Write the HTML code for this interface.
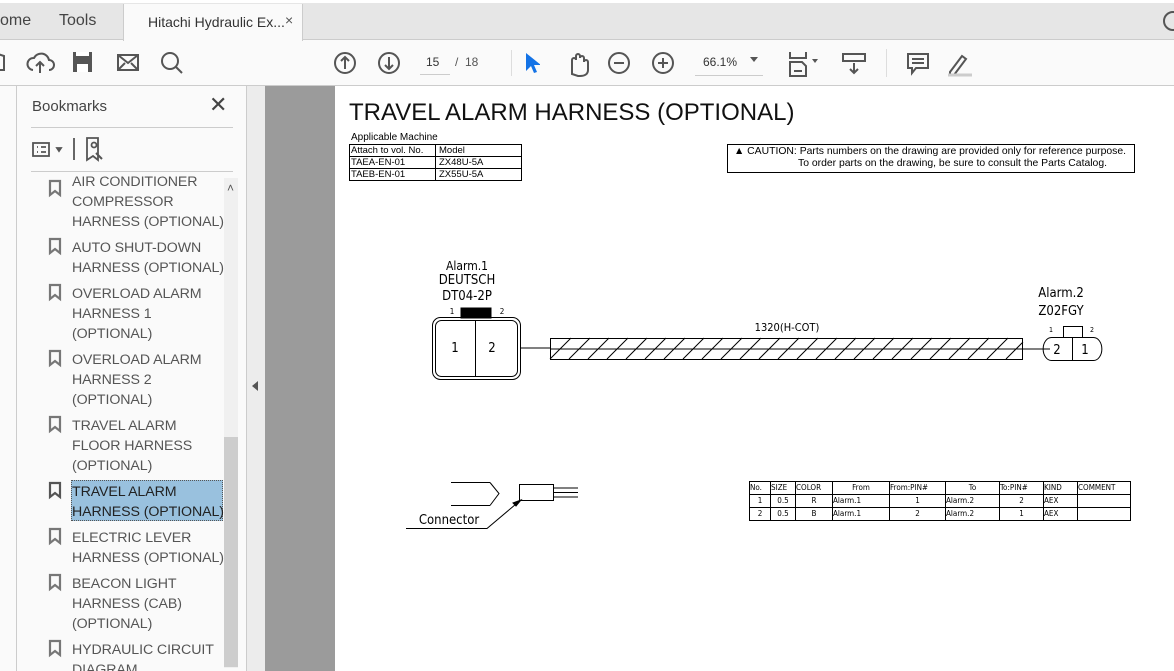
<!DOCTYPE html>
<html><head><meta charset="utf-8"><style>
*{margin:0;padding:0;box-sizing:border-box}
body{width:1174px;height:671px;overflow:hidden;position:relative;background:#fafafa;font-family:"Liberation Sans",sans-serif;color:#444}
.a{position:absolute}
.bm{position:absolute;left:72px;font-size:14.2px;line-height:20px;color:#555;letter-spacing:-0.1px;white-space:nowrap}
.t{font-family:"Liberation Sans",sans-serif;color:#000}
.n{font-family:"DejaVu Sans Condensed","Liberation Sans Narrow",sans-serif}
</style></head><body>
<!-- tab bar -->
<div class="a" style="left:0;top:0;width:1174px;height:40px;background:#e6e6e6;border-top:3px solid #fff;border-bottom:1px solid #ccc"></div>
<div class="a" style="left:0;top:12px;font-size:16px;color:#444">ome</div>
<div class="a" style="left:59px;top:12px;font-size:16px;color:#444">Tools</div>
<div class="a" style="left:123px;top:4px;width:180px;height:37px;background:#fafafa;border-left:1px solid #ccc;border-right:1px solid #ccc"></div>
<div class="a" style="left:148px;top:14px;font-size:14px;color:#333">Hitachi Hydraulic Ex...</div>
<div class="a" style="left:285px;top:12px;font-size:14px;color:#555">×</div>
<div class="a" style="left:1163px;top:11px;width:20px;height:20px;border:2px solid #555;border-radius:50%"></div>
<!-- toolbar -->
<div class="a" style="left:0;top:85px;width:1174px;height:1px;background:#ccc"></div>
<svg class="a" style="left:0;top:44px" width="1174" height="40" fill="none" stroke="#555" stroke-width="2">
<path d="M-2 10v16h6V12z"/>
<path d="M33 26a6 6 0 0 1 1-12 8 8 0 0 1 15 2 5 5 0 0 1 0 10M40 29v-11m-4 4 4-4 4 4"/>
<rect x="73" y="8" width="19" height="20" fill="#555" stroke="none"/><rect x="77" y="20" width="11" height="8" fill="#fff" stroke="none"/><rect x="76" y="8" width="13" height="4" fill="#fff" stroke="none"/>
<rect x="118" y="11" width="20" height="15"/><path d="M118 11l10 8 10-8M118 26l7-7M138 26l-7-7"/>
<circle cx="170" cy="17" r="8"/><path d="M176 23l6 6"/>
<circle cx="345" cy="19" r="10"/><path d="M345 25V13m-4 4 4-4 4 4"/>
<circle cx="389" cy="19" r="10"/><path d="M389 13v12m-4-4 4 4 4-4"/>
<circle cx="619" cy="19" r="10"/><path d="M614 19h10"/>
<circle cx="663" cy="19" r="10"/><path d="M658 19h10M663 14v10"/>
<path d="M790 8v6h16V8M790 18h12l4 4v10h-16z M794 27h8" />
<path d="M843 10h22v7h-22zM854 19v10m-4-4 4 4 4-4"/>
<path d="M908 10h20v14h-12l-4 5v-5h-4zM912 15h12M912 19h12"/>
<path d="M950 28l12-16 4 3-12 16h-4z"/><path d="M948 31h24" stroke="#ccc" stroke-width="3"/>
<path d="M572 30v-14a2 2 0 0 1 4 0v-4a2 2 0 0 1 4 0v2a2 2 0 0 1 4 0v4a2 2 0 0 1 4 0v8c0 4-3 6-8 6h-2z"/>
</svg>
<svg class="a" style="left:524px;top:52px" width="16" height="22"><path d="M2 1v18l5-5 3 7 3-1-3-7h7z" fill="#1473e6"/></svg>
<div class="a" style="left:426px;top:55px;font-size:12px;color:#333">15</div>
<div class="a" style="left:420px;top:74px;width:30px;height:1px;background:#ccc"></div>
<div class="a" style="left:455px;top:55px;font-size:12px;color:#555">/&nbsp; 18</div>
<div class="a" style="left:511px;top:50px;width:1px;height:26px;background:#ddd"></div>
<div class="a" style="left:703px;top:55px;font-size:12px;color:#333">66.1%</div>
<div class="a" style="left:695px;top:75px;width:68px;height:1px;background:#ccc"></div>
<div class="a" style="left:750px;top:57px;border:4px solid transparent;border-top:5px solid #555"></div>
<div class="a" style="left:812px;top:59px;border:3px solid transparent;border-top:4px solid #555"></div>
<div class="a" style="left:886px;top:49px;width:1px;height:28px;background:#ddd"></div>
<!-- left strip -->
<div class="a" style="left:16px;top:86px;width:1px;height:585px;background:#ccc"></div>
<!-- bookmark panel -->
<div class="a" style="left:32px;top:98px;font-size:15px;color:#444">Bookmarks</div>
<div class="a" style="left:209px;top:92px;font-size:22px;color:#444">✕</div>
<div class="a" style="left:31px;top:127px;width:202px;height:1px;background:#ccc"></div>
<div class="a" style="left:31px;top:171px;width:202px;height:1px;background:#ccc"></div>
<svg class="a" style="left:30px;top:136px" width="80" height="30" fill="none" stroke="#555" stroke-width="1.8"><rect x="3" y="7" width="16" height="13"/><path d="M7 11h1M7 16h1M11 11h5M11 16h5"/><path d="M27 12l4 0-2 3z" fill="#555"/><path d="M44 2v22"/><path d="M57 2h11v22l-5-4-6 4z"/><circle cx="64" cy="9" r="2.5"/><path d="M66 17l6 6" stroke-width="2"/></svg>
<div class="a" style="left:224px;top:178px;width:14px;height:490px;background:#f0f0f0"></div>
<div class="a" style="left:224px;top:437px;width:14px;height:230px;background:#cdcdcd"></div>
<div class="a" style="left:227px;top:181px;font-size:12px;color:#555">˄</div>
<div class="a" style="left:17px;top:172px;width:207px;height:499px;overflow:hidden">
<div style="position:relative;left:-17px;top:-172px">
<div class="bm" style="top:172px">AIR CONDITIONER<br>COMPRESSOR<br>HARNESS (OPTIONAL)</div>
<div class="bm" style="top:238px">AUTO SHUT-DOWN<br>HARNESS (OPTIONAL)</div>
<div class="bm" style="top:284px">OVERLOAD ALARM<br>HARNESS 1<br>(OPTIONAL)</div>
<div class="bm" style="top:350px">OVERLOAD ALARM<br>HARNESS 2<br>(OPTIONAL)</div>
<div class="bm" style="top:416px">TRAVEL ALARM<br>FLOOR HARNESS<br>(OPTIONAL)</div>
<div class="a" style="left:71px;top:480px;width:152px;height:41px;background:#99c1de;border:1px dotted #555"></div>
<div class="bm" style="top:482px;color:#222">TRAVEL ALARM<br>HARNESS (OPTIONAL)</div>
<div class="bm" style="top:528px">ELECTRIC LEVER<br>HARNESS (OPTIONAL)</div>
<div class="bm" style="top:574px">BEACON LIGHT<br>HARNESS (CAB)<br>(OPTIONAL)</div>
<div class="bm" style="top:640px">HYDRAULIC CIRCUIT<br>DIAGRAM</div>
<svg class="a" style="left:48px;top:172px" width="14" height="500" fill="none" stroke="#777" stroke-width="2.2">
<path d="M2 9h10v14l-5-4-5 4z"/>
<path d="M2 67h10v14l-5-4-5 4z"/><path d="M2 113h10v14l-5-4-5 4z"/><path d="M2 179h10v14l-5-4-5 4z"/><path d="M2 245h10v14l-5-4-5 4z"/><path d="M2 311h10v14l-5-4-5 4z" stroke="#555"/><path d="M2 357h10v14l-5-4-5 4z"/><path d="M2 403h10v14l-5-4-5 4z"/><path d="M2 469h10v14l-5-4-5 4z"/>
</svg>
</div></div>
<!-- splitter -->
<div class="a" style="left:246px;top:86px;width:1px;height:585px;background:#ccc"></div>
<div class="a" style="left:247px;top:86px;width:18px;height:585px;background:#ececec"></div>
<div class="a" style="left:252px;top:381px;border:5px solid transparent;border-right:6px solid #555;border-left:0"></div>
<div class="a" style="left:265px;top:86px;width:70px;height:585px;background:#9b9b9b"></div>
<!-- page -->
<div class="a" style="left:335px;top:86px;width:839px;height:585px;background:#fff"></div>
<div class="a t" style="left:349px;top:99px;font-size:24px;color:#111">TRAVEL ALARM HARNESS (OPTIONAL)</div>
<div class="a t" style="left:351px;top:132px;font-size:10px">Applicable Machine</div>
<table class="a t" style="left:349px;top:144px;border-collapse:collapse;font-size:9.5px;line-height:11px">
<tr><td style="border:1px solid #000;width:86px;padding:0 1px">Attach to vol. No.</td><td style="border:1px solid #000;width:86px;padding:0 3px">Model</td></tr>
<tr><td style="border:1px solid #000;padding:0 1px">TAEA-EN-01</td><td style="border:1px solid #000;padding:0 3px">ZX48U-5A</td></tr>
<tr><td style="border:1px solid #000;padding:0 1px">TAEB-EN-01</td><td style="border:1px solid #000;padding:0 3px">ZX55U-5A</td></tr></table>
<div class="a t" style="left:727px;top:144px;width:408px;height:29px;border:1px solid #000;font-size:10.4px;line-height:12px;padding:1px 0 0 6px;white-space:nowrap">▲ CAUTION: Parts numbers on the drawing are provided only for reference purpose.<br><span style="padding-left:64px">To order parts on the drawing, be sure to consult the Parts Catalog.</span></div>
<svg class="a" style="left:335px;top:86px" width="839" height="585" fill="none" stroke="#000" stroke-width="1">
<g font-family="DejaVu Sans Condensed,sans-serif" fill="#000" stroke="none" text-anchor="middle">
<text x="132" y="184" font-size="12">Alarm.1</text><text x="132" y="198" font-size="13">DEUTSCH</text><text x="132" y="214" font-size="13">DT04-2P</text>
<text x="117" y="228" font-size="8">1</text><text x="167" y="228" font-size="8">2</text>
<text x="120" y="266" font-size="13">1</text><text x="157" y="266" font-size="13">2</text>
<text x="452" y="245" font-size="11">1320(H-COT)</text>
<text x="726" y="211" font-size="13">Alarm.2</text><text x="726" y="229" font-size="13">Z02FGY</text>
<text x="716" y="246" font-size="7">1</text><text x="757" y="246" font-size="7">2</text>
<text x="722" y="268" font-size="13">2</text><text x="750" y="268" font-size="13">1</text>
<text x="114" y="438" font-size="13">Connector</text>
</g>
<rect x="97.5" y="231.5" width="88" height="62" rx="8"/><rect x="100.5" y="234.5" width="82" height="56" rx="6"/>
<path d="M140.5 234v57"/><rect x="126" y="222" width="30" height="10" fill="#000"/>
<path d="M186 262h30"/>
<rect x="215.5" y="252.5" width="472" height="21"/><path d="M215 263h473"/>
<path d="M215 273l21-21M234 273l21-21M253 273l21-21M272 273l21-21M291 273l21-21M310 273l21-21M329 273l21-21M348 273l21-21M367 273l21-21M386 273l21-21M405 273l21-21M424 273l21-21M443 273l21-21M462 273l21-21M481 273l21-21M500 273l21-21M519 273l21-21M538 273l21-21M557 273l21-21M576 273l21-21M595 273l21-21M614 273l21-21M633 273l21-21M652 273l21-21M671 273l17-17"/>
<path d="M688 263h27"/>
<path d="M716.5 251.5h42a8 11 0 0 1 0 23h-42a8 11 0 0 1 0-23z"/><path d="M737.5 251v24"/><rect x="728.5" y="240.5" width="19" height="11"/>
<path d="M116 396.5h39M116 419.5h39M155 396.5l9 11-9 12"/>
<rect x="184.5" y="398.5" width="34" height="16"/><path d="M219 402h24M219 406.5h24M219 411h24"/>
<path d="M71 442.5h81l32-27"/><path d="M186 414l-8 3 3 3z" fill="#000"/>
</svg>
<table class="a n" style="left:749px;top:481px;border-collapse:collapse;font-size:8px;line-height:12px;color:#000">
<tr><td style="border:1px solid #000;width:21px">No.</td><td style="border:1px solid #000;width:25px">SIZE</td><td style="border:1px solid #000;width:37px">COLOR</td><td style="border:1px solid #000;width:57px;text-align:center">From</td><td style="border:1px solid #000;width:56px">From:PIN#</td><td style="border:1px solid #000;width:54px;text-align:center">To</td><td style="border:1px solid #000;width:44px">To:PIN#</td><td style="border:1px solid #000;width:34px">KIND</td><td style="border:1px solid #000;width:53px">COMMENT</td></tr>
<tr><td style="border:1px solid #000;text-align:center">1</td><td style="border:1px solid #000;text-align:center">0.5</td><td style="border:1px solid #000;text-align:center">R</td><td style="border:1px solid #000">Alarm.1</td><td style="border:1px solid #000;text-align:center">1</td><td style="border:1px solid #000">Alarm.2</td><td style="border:1px solid #000;text-align:center">2</td><td style="border:1px solid #000">AEX</td><td style="border:1px solid #000"></td></tr>
<tr><td style="border:1px solid #000;text-align:center">2</td><td style="border:1px solid #000;text-align:center">0.5</td><td style="border:1px solid #000;text-align:center">B</td><td style="border:1px solid #000">Alarm.1</td><td style="border:1px solid #000;text-align:center">2</td><td style="border:1px solid #000">Alarm.2</td><td style="border:1px solid #000;text-align:center">1</td><td style="border:1px solid #000">AEX</td><td style="border:1px solid #000"></td></tr>
</table>
</body></html>
